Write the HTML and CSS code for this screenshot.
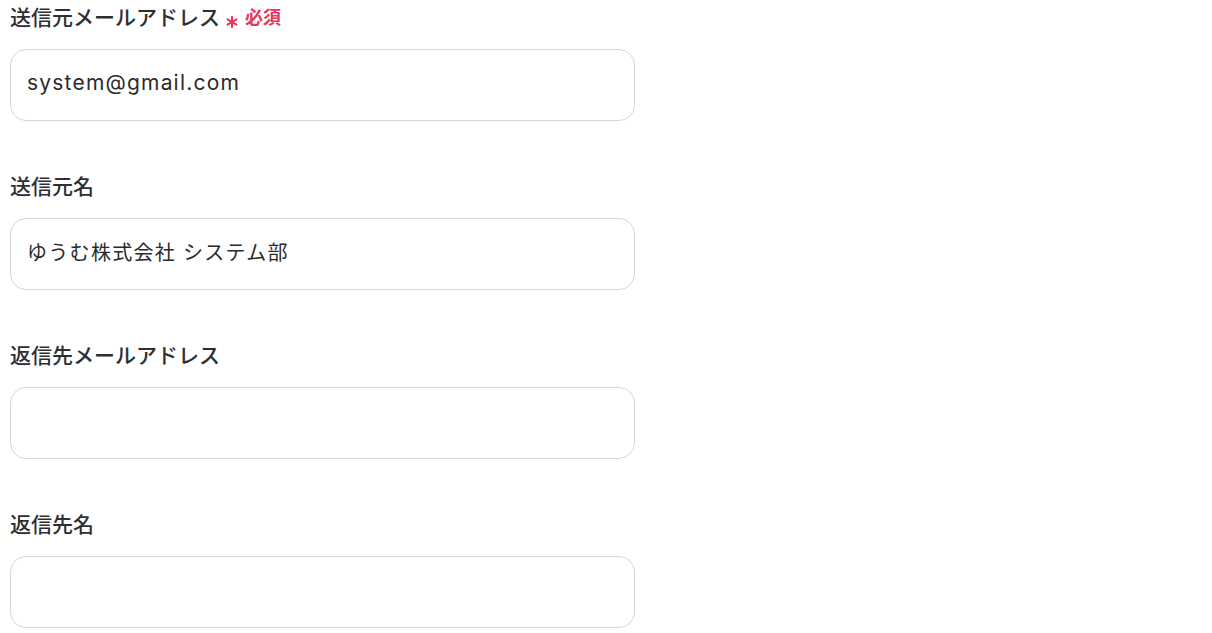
FILE: index.html
```html
<!DOCTYPE html>
<html lang="ja">
<head>
<meta charset="utf-8">
<link rel="stylesheet" href="styles.css">
</head>
<body>
<form class="form">
  <div class="field">
    <label class="label">送信元メールアドレス<span class="req"><svg class="star" viewBox="0 0 12 12" width="12" height="12" aria-hidden="true"><g stroke="currentColor" stroke-width="2" stroke-linecap="round"><line x1="6" y1="0.8" x2="6" y2="11.2"/><line x1="1.5" y1="3.4" x2="10.5" y2="8.6"/><line x1="1.5" y1="8.6" x2="10.5" y2="3.4"/></g></svg>必須</span></label>
    <div class="input input-latin">system@gmail.com</div>
  </div>
  <div class="field">
    <label class="label">送信元名</label>
    <div class="input">ゆうむ株式会社 システム部</div>
  </div>
  <div class="field">
    <label class="label">返信先メールアドレス</label>
    <div class="input"></div>
  </div>
  <div class="field">
    <label class="label">返信先名</label>
    <div class="input"></div>
  </div>
</form>
</body>
</html>
```
FILE: styles.css
```css
html, body { margin: 0; padding: 0; background: #fff; }
body {
  font-family: Inter, "Noto Sans CJK JP", sans-serif;
  color: #2b2b2b;
}
.form {
  display: flex;
  flex-direction: column;
  gap: 52px;
  padding: 4px 0 0 10px;
  width: 625px;
}
.field {
  display: flex;
  flex-direction: column;
  gap: 17px;
}
.label {
  font-size: 21px;
  line-height: 28px;
  font-weight: 500;
  display: flex;
  align-items: center;
  color: #2f2f33;
}
.req {
  display: inline-flex;
  align-items: center;
  color: #e8365d;
  font-size: 18px;
  font-weight: 700;
  margin-left: 6px;
}
.star {
  margin-right: 7px;
  position: relative;
  top: 4px;
}
.input {
  box-sizing: border-box;
  height: 72px;
  border: 1px solid #d3d6dc;
  border-radius: 16px;
  padding: 0 16px 6px;
  display: flex;
  align-items: center;
  font-size: 20px;
  letter-spacing: 1.3px;
  color: #2b2b2b;
}
.input-latin {
  font-size: 21px;
  letter-spacing: 1.2px;
}
```
